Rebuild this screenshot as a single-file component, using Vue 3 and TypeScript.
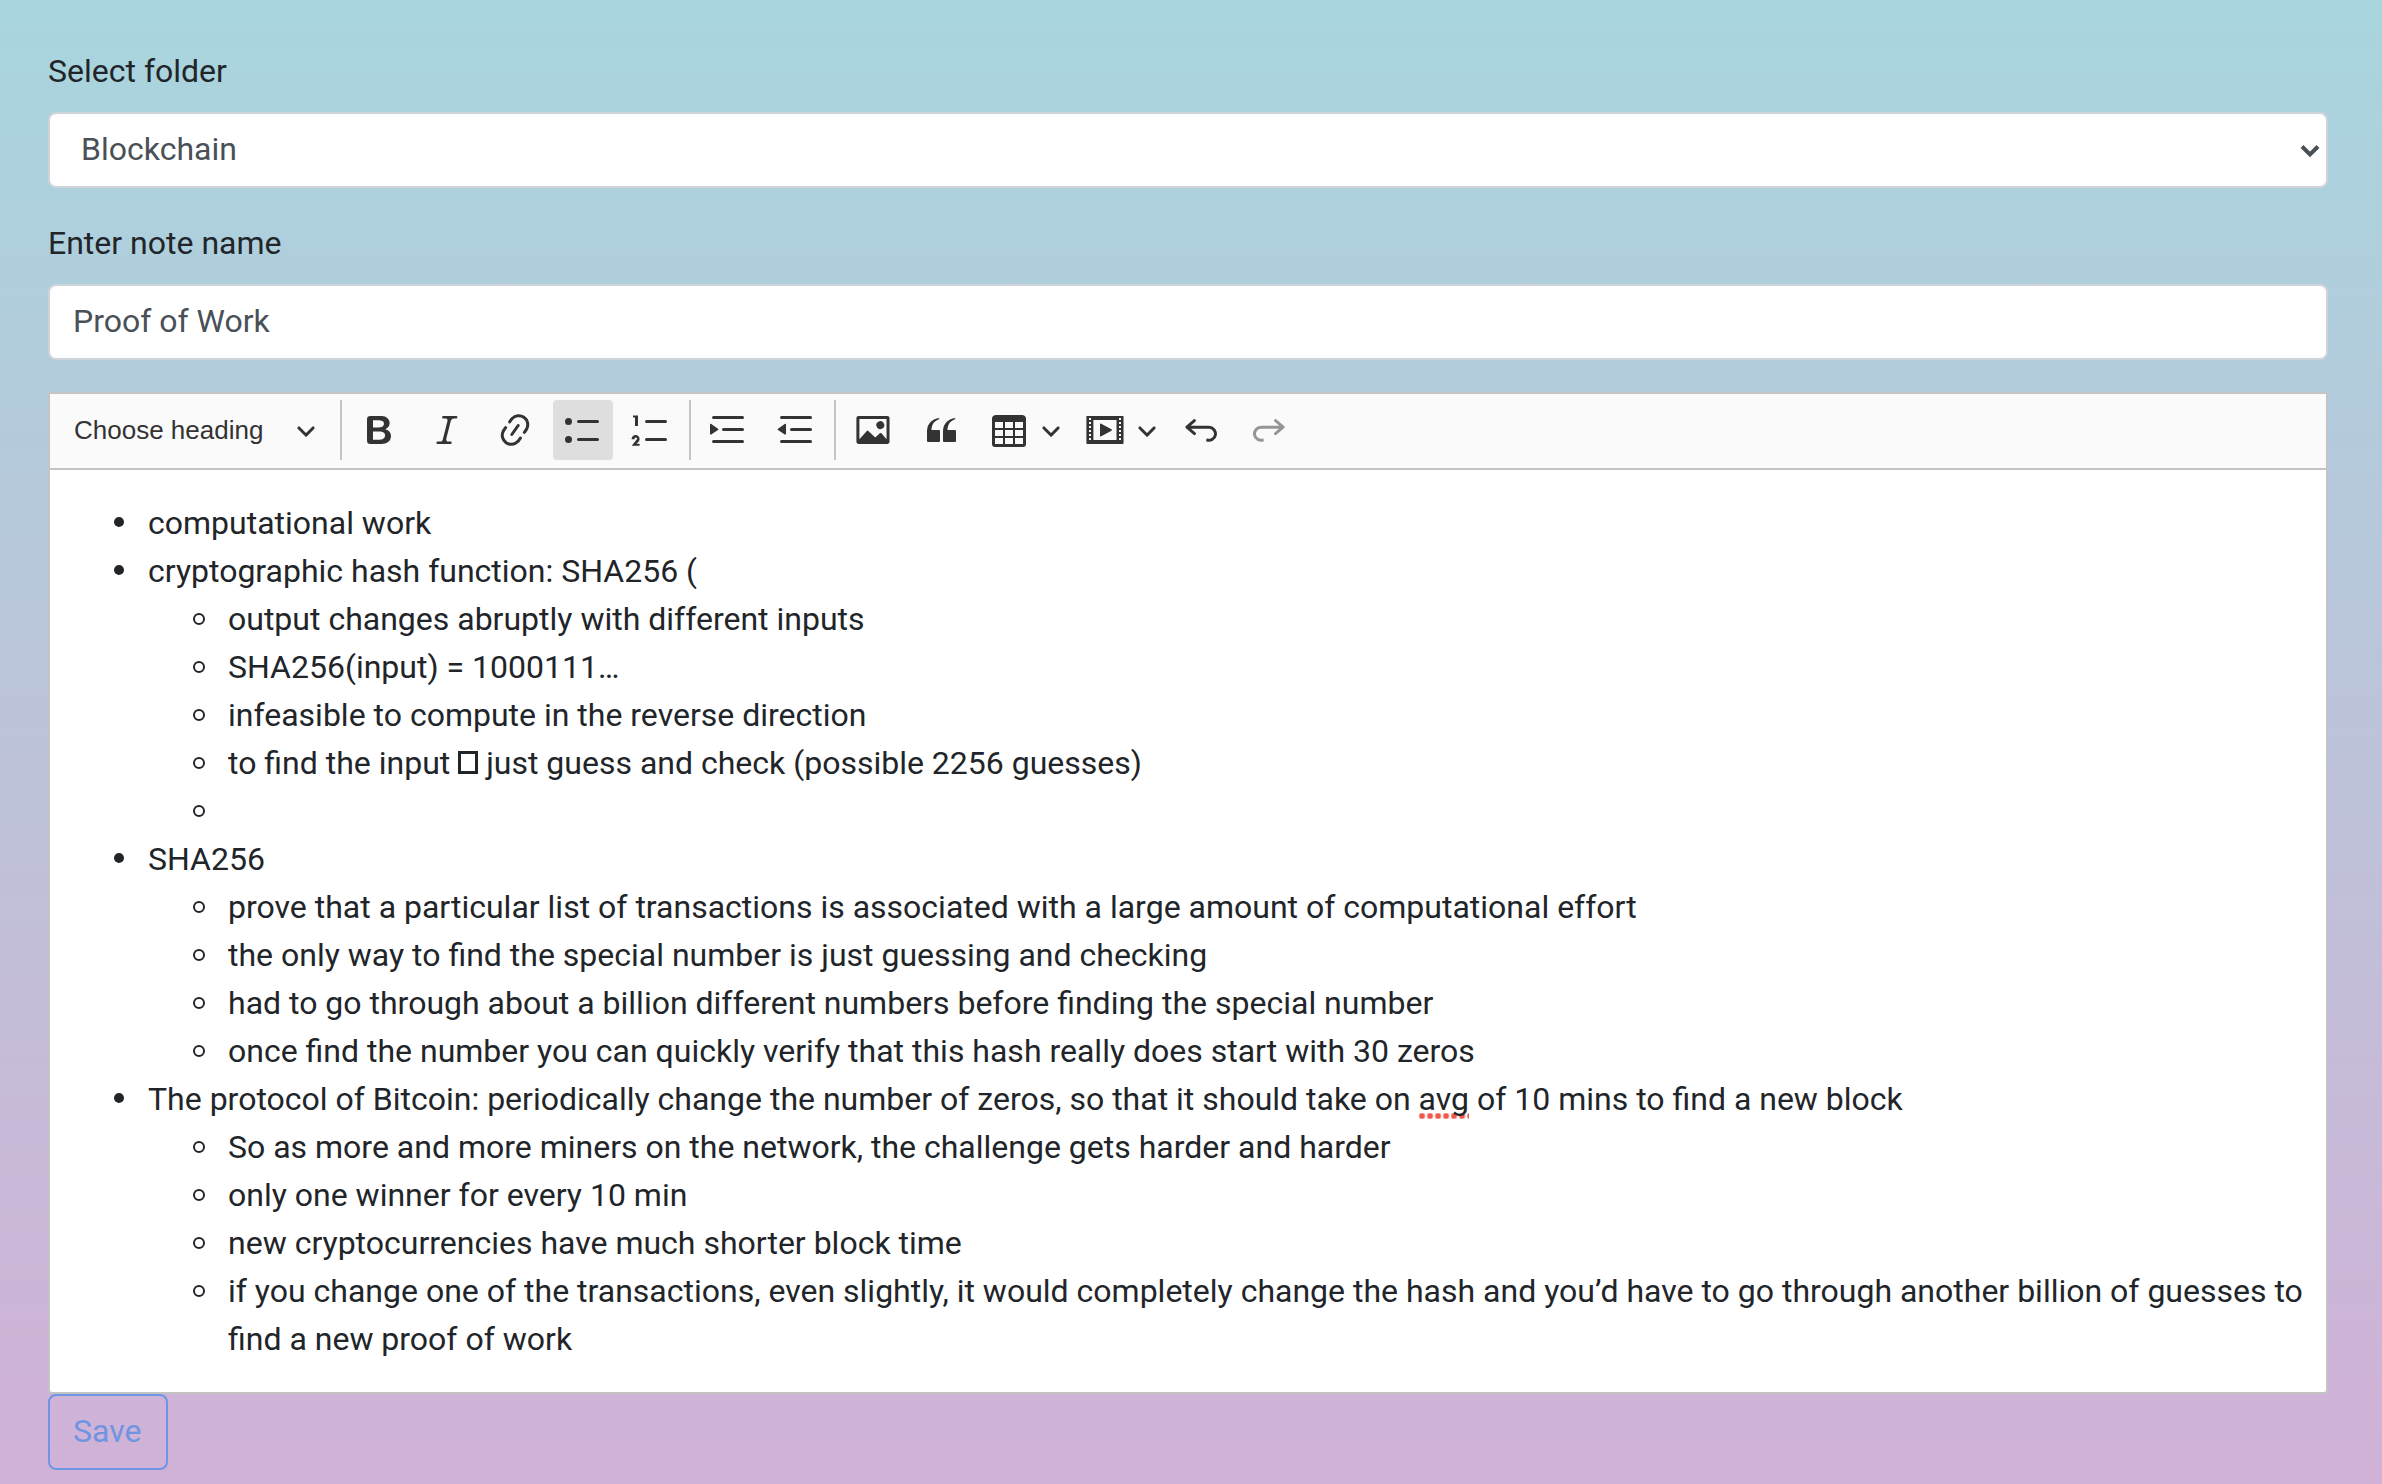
<script setup lang="ts">
import { ref } from 'vue'

interface Tool {
  id: string
  label: string
  paths: string[]
  active?: boolean
  disabled?: boolean
  split?: boolean
}

interface Note {
  text: string
  children: string[]
}

interface Segment {
  kind: 'text' | 'misspelled' | 'box'
  value: string
}

const folder = ref('Blockchain')
const noteName = ref('Proof of Work')

const arrow =
  'M.941 4.523a.75.75 0 1 1 1.06-1.06l3.006 3.005 3.005-3.005a.75.75 0 1 1 1.06 1.06l-3.549 3.55a.75.75 0 0 1-1.168-.136L.941 4.523z'

const line = (x: number, y: number) =>
  `M${x} ${y}c0 .414.336.75.75.75h${17.25 - x - 0.75}a.75.75 0 1 0 0-1.5h-${17.25 - x - 0.75}a.75.75 0 0 0-.75.75z`

const groups: Tool[][] = [
  [
    {
      id: 'bold',
      label: 'Bold',
      paths: [
        'M10.187 17H5.773c-.637 0-1.092-.138-1.364-.415-.273-.277-.409-.718-.409-1.323V4.738c0-.617.14-1.062.419-1.332.279-.27.73-.406 1.354-.406h4.68c.69 0 1.288.041 1.793.124.506.083.96.242 1.36.478.341.197.644.447.906.75a3.262 3.262 0 0 1 .808 2.162c0 1.401-.722 2.426-2.167 3.075C15.05 10.175 16 11.315 16 13.01a3.756 3.756 0 0 1-2.296 3.504 6.1 6.1 0 0 1-1.517.377c-.571.073-1.238.11-2 .11zm-.217-6.217H7v4.087h3.069c1.977 0 2.965-.69 2.965-2.072 0-.707-.256-1.22-.768-1.537-.512-.319-1.277-.478-2.296-.478zM7 5.13v3.619h2.606c.729 0 1.292-.067 1.69-.2a1.6 1.6 0 0 0 .91-.765c.165-.267.247-.566.247-.897 0-.707-.26-1.176-.778-1.409-.519-.232-1.31-.348-2.375-.348H7z',
      ],
    },
    {
      id: 'italic',
      label: 'Italic',
      paths: [
        'm9.586 14.633.021.004c-.036.335.095.655.393.962.082.083.173.15.274.201h1.474a.6.6 0 1 1 0 1.2H5.304a.6.6 0 0 1 0-1.2h1.15c.474-.07.809-.182 1.005-.334.157-.122.291-.32.404-.597l2.416-9.55a1.053 1.053 0 0 0-.281-.823 1.12 1.12 0 0 0-.442-.296H8.15a.6.6 0 0 1 0-1.2h6.443a.6.6 0 1 1 0 1.2h-1.195c-.376.056-.65.155-.823.296-.215.175-.423.439-.623.79l-2.366 9.347z',
      ],
    },
    {
      id: 'link',
      label: 'Link',
      paths: [
        'm11.077 15 .991-1.416a.75.75 0 1 1 1.229.86l-1.148 1.64a.748.748 0 0 1-.217.206 5.251 5.251 0 0 1-8.503-5.955.741.741 0 0 1 .12-.274l1.147-1.639a.75.75 0 1 1 1.228.86L4.933 10.7l.006.003a3.75 3.75 0 0 0 6.132 4.294l.006.004zm5.494-5.335a.748.748 0 0 1-.12.274l-1.147 1.639a.75.75 0 1 1-1.228-.86l.86-1.23a3.75 3.75 0 0 0-6.144-4.301l-.86 1.229a.75.75 0 0 1-1.229-.86l1.148-1.64a.748.748 0 0 1 .217-.206 5.251 5.251 0 0 1 8.503 5.955zm-4.563-2.532a.75.75 0 0 1 .184 1.045l-3.155 4.505a.75.75 0 1 1-1.229-.86l3.155-4.506a.75.75 0 0 1 1.045-.184z',
      ],
    },
    {
      id: 'bulleted',
      label: 'Bulleted List',
      active: true,
      paths: [
        line(7, 5.75),
        line(7, 14.75),
        'M1 5.75a1.75 1.75 0 1 0 3.5 0a1.75 1.75 0 1 0-3.5 0z',
        'M1 14.75a1.75 1.75 0 1 0 3.5 0a1.75 1.75 0 1 0-3.5 0z',
      ],
    },
    {
      id: 'numbered',
      label: 'Numbered List',
      paths: [
        line(7, 5.75),
        line(7, 14.75),
        'M3.5 3v5H2V3.7H1v-1h2.5V3z',
        'M.343 17.857l2.59-3.257H2.92a.6.6 0 1 0-1.04 0H.302a2 2 0 1 1 3.995 0h-.001c-.048.405-.16.734-.333.988-.175.254-.59.692-1.244 1.312H4.3v1h-4l.043-.043z',
      ],
    },
  ],
  [
    {
      id: 'indent',
      label: 'Increase indent',
      paths: [
        line(2, 3.75),
        line(7, 9.75),
        line(2, 15.75),
        'M1.632 6.95 5.02 9.358a.4.4 0 0 1-.013.661l-3.39 2.207A.4.4 0 0 1 1 11.892V7.275a.4.4 0 0 1 .632-.326z',
      ],
    },
    {
      id: 'outdent',
      label: 'Decrease indent',
      paths: [
        line(2, 3.75),
        line(7, 9.75),
        line(2, 15.75),
        'M4.368 6.95.98 9.358a.4.4 0 0 0 .013.661l3.39 2.207A.4.4 0 0 0 5 11.892V7.275a.4.4 0 0 0-.632-.326z',
      ],
    },
  ],
  [
    {
      id: 'image',
      label: 'Insert image',
      paths: [
        'M6.91 10.54c.26-.23.64-.21.88.03l3.36 3.14 2.23-2.06a.64.64 0 0 1 .87 0l2.52 2.97V4.5H3.2v10.12l3.71-4.08zm10.27-7.51c.6 0 1.09.47 1.09 1.05v11.84c0 .59-.49 1.06-1.09 1.06H2.79c-.6 0-1.09-.47-1.09-1.06V4.08c0-.58.49-1.05 1.1-1.05h14.38zm-5.22 5.56a1.96 1.96 0 1 1 3.4-1.96 1.96 1.96 0 0 1-3.4 1.96z',
      ],
    },
    {
      id: 'quote',
      label: 'Block quote',
      paths: [
        'M3 10.423a6.5 6.5 0 0 1 6.056-6.408l.038.67C6.448 5.423 5.354 7.663 5.22 10H9c.552 0 .5.432.5.986v4.511c0 .554-.448.503-1 .503h-5c-.552 0-.5-.449-.5-1.003v-4.574zm8 0a6.5 6.5 0 0 1 6.056-6.408l.038.67c-2.646.739-3.74 2.979-3.873 5.315H17c.552 0 .5.432.5.986v4.511c0 .554-.448.503-1 .503h-5c-.552 0-.5-.449-.5-1.003v-4.574z',
      ],
    },
    {
      id: 'table',
      label: 'Insert table',
      split: true,
      paths: [
        'M3 6v3h4V6H3zm0 4v3h4v-3H3zm0 4v3h4v-3H3zm5 3h4v-3H8v3zm5 0h4v-3h-4v3zm4-4v-3h-4v3h4zm0-4V6h-4v3h4zm1.5 8a1.5 1.5 0 0 1-1.5 1.5H3A1.5 1.5 0 0 1 1.5 17V4c.222-.863 1.068-1.5 2-1.5h13c.932 0 1.778.637 2 1.5v13zM12 13v-3H8v3h4zm0-4V6H8v3h4z',
      ],
    },
    {
      id: 'media',
      label: 'Insert media',
      split: true,
      paths: [
        'M18.68 3.03c.6 0 .59-.03.59.55v12.84c0 .59.01.56-.59.56H1.29c-.6 0-.59.03-.59-.56V3.58c0-.58-.01-.55.6-.55h17.38zM15.77 15.03V4.97H4.2v10.06h11.57zM2 4v1h1V4H2zm0 2v1h1V6H2zm0 2v1h1V8H2zm0 2v1h1v-1H2zm0 2v1h1v-1H2zm0 2v1h1v-1H2zM17 4v1h1V4h-1zm0 2v1h1V6h-1zm0 2v1h1V8h-1zm0 2v1h1v-1h-1zm0 2v1h1v-1h-1zm0 2v1h1v-1h-1zM7.5 7.177a.4.4 0 0 1 .593-.351l5.133 2.824a.4.4 0 0 1 0 .7l-5.133 2.824a.4.4 0 0 1-.593-.35V7.176v.001z',
      ],
    },
    {
      id: 'undo',
      label: 'Undo',
      paths: [
        'm5.042 9.367 2.189 1.837a.75.75 0 0 1-.965 1.149l-3.788-3.18a.747.747 0 0 1-.21-.284.75.75 0 0 1 .17-.945L6.23 4.762a.75.75 0 1 1 .964 1.15L4.863 7.866h8.917A.75.75 0 0 1 14 7.9a4 4 0 1 1-1.477 7.718l.344-1.489a2.5 2.5 0 1 0 1.094-4.73l.008-.032H5.042z',
      ],
    },
    {
      id: 'redo',
      label: 'Redo',
      disabled: true,
      paths: [
        'm14.958 9.367-2.189 1.837a.75.75 0 0 0 .965 1.149l3.788-3.18a.747.747 0 0 0 .21-.284.75.75 0 0 0-.17-.945L13.77 4.762a.75.75 0 1 0-.964 1.15l2.331 1.955H6.22A.75.75 0 0 0 6 7.9a4 4 0 1 0 1.477 7.718l-.344-1.489A2.5 2.5 0 1 1 6.039 9.4l-.008-.032h8.927z',
      ],
    },
  ],
]

const notes: Note[] = [
  { text: 'computational work', children: [] },
  {
    text: 'cryptographic hash function: SHA256 (',
    children: [
      'output changes abruptly with different inputs',
      'SHA256(input) = 1000111…',
      'infeasible to compute in the reverse direction',
      'to find the input [] just guess and check (possible 2256 guesses)',
      '',
    ],
  },
  {
    text: 'SHA256',
    children: [
      'prove that a particular list of transactions is associated with a large amount of computational effort',
      'the only way to find the special number is just guessing and checking',
      'had to go through about a billion different numbers before finding the special number',
      'once find the number you can quickly verify that this hash really does start with 30 zeros',
    ],
  },
  {
    text: 'The protocol of Bitcoin: periodically change the number of zeros, so that it should take on *avg* of 10 mins to find a new block',
    children: [
      'So as more and more miners on the network, the challenge gets harder and harder',
      'only one winner for every 10 min',
      'new cryptocurrencies have much shorter block time',
      'if you change one of the transactions, even slightly, it would completely change the hash and you’d have to go through another billion of guesses to find a new proof of work',
    ],
  },
]

// *word* is flagged by the spell checker, [] is a symbol the font has no glyph for.
const segments = (text: string): Segment[] =>
  text
    .split(/(\*[^*]+\*|\[\])/)
    .filter((part) => part !== '')
    .map((part): Segment => {
      if (part === '[]') return { kind: 'box', value: '' }
      if (part.startsWith('*')) return { kind: 'misspelled', value: part.slice(1, -1) }
      return { kind: 'text', value: part }
    })
</script>

<template>
  <form class="page" @submit.prevent>
    <div class="form-group">
      <label for="folder">Select folder</label>
      <div class="select-wrap">
        <select id="folder" v-model="folder" class="control select">
          <option>Blockchain</option>
        </select>
        <svg class="chevron" viewBox="0 0 20 14" aria-hidden="true">
          <path d="M2 2.5l8 8 8-8" fill="none" stroke="#495057" stroke-width="4" />
        </svg>
      </div>
    </div>

    <div class="form-group">
      <label for="note-name">Enter note name</label>
      <input id="note-name" v-model="noteName" type="text" class="control" />
    </div>

    <div class="editor">
      <div class="toolbar" role="toolbar" aria-label="Editor toolbar">
        <button type="button" class="heading">
          <span>Choose heading</span>
          <svg class="arrow" viewBox="0 0 10 10" aria-hidden="true"><path :d="arrow" /></svg>
        </button>
        <template v-for="(group, g) in groups" :key="g">
          <span class="separator"></span>
          <div v-for="tool in group" :key="tool.id" class="tool">
            <button
              type="button"
              class="tool-button"
              :class="{ active: tool.active }"
              :disabled="tool.disabled"
              :aria-label="tool.label"
            >
              <svg class="icon" viewBox="0 0 20 20" aria-hidden="true">
                <path v-for="(d, i) in tool.paths" :key="i" :d="d" fill-rule="evenodd" />
              </svg>
            </button>
            <button v-if="tool.split" type="button" class="split" :aria-label="tool.label + ' options'">
              <svg class="arrow" viewBox="0 0 10 10" aria-hidden="true"><path :d="arrow" /></svg>
            </button>
          </div>
        </template>
      </div>
      <div class="content" role="textbox" aria-multiline="true" aria-label="Note">
        <ul>
          <li v-for="(note, n) in notes" :key="n">
            <span v-for="(part, p) in segments(note.text)" :key="p" :class="part.kind">{{ part.value }}</span>
            <ul v-if="note.children.length">
              <li v-for="(child, c) in note.children" :key="c">
                <span v-for="(part, p) in segments(child)" :key="p" :class="part.kind">{{ part.value }}</span>
              </li>
            </ul>
          </li>
        </ul>
      </div>
    </div>
    <button type="submit" class="save" disabled>Save</button>
  </form>
</template>

<style>
body {
  margin: 0;
}
</style>

<style scoped>
.page {
  box-sizing: border-box;
  min-height: 100vh;
  padding: 48px 54px 14px 48px;
  background: linear-gradient(#a8d5de, #d1b1d7);
  color: #212529;
  font-family: Roboto, 'Liberation Sans', sans-serif;
  font-size: 32px;
  line-height: 48px;
}

.form-group {
  margin-bottom: 32px;
}

label {
  display: block;
  padding-bottom: 18px;
  line-height: 46px;
}

.control {
  display: block;
  box-sizing: border-box;
  width: 100%;
  height: 76px;
  padding: 11px 23px 13px;
  border: 2px solid #ced4da;
  border-radius: 8px;
  background: #fff;
  color: #495057;
  font: inherit;
}

.select-wrap {
  position: relative;
}

.select {
  padding-left: 31px;
  appearance: none;
}

.chevron {
  position: absolute;
  top: 32px;
  right: 8px;
  width: 20px;
  height: 14px;
  pointer-events: none;
}

.editor {
  border: 2px solid #c4c4c4;
  border-radius: 4px;
  background: #fff;
}

.toolbar {
  display: flex;
  flex-wrap: wrap;
  gap: 8px;
  padding: 6px 8px 8px;
  border-bottom: 2px solid #c4c4c4;
  background: #fafafa;
}

.toolbar button {
  display: flex;
  align-items: center;
  box-sizing: border-box;
  height: 60px;
  border: 0;
  border-radius: 4px;
  background: none;
  color: #333;
}

.toolbar .heading {
  justify-content: space-between;
  width: 274px;
  padding: 0 16px;
  font: 26px 'Liberation Sans', Arial, sans-serif;
}

.separator {
  width: 2px;
  height: 60px;
  margin-right: -1px;
  background: #c4c4c4;
}

.tool {
  display: flex;
}

.toolbar .tool-button {
  width: 60px;
  padding: 10px;
}

.toolbar .active {
  background: #dedede;
}

.toolbar .tool-button:disabled .icon {
  opacity: 0.5;
}

.toolbar .split {
  width: 28px;
  padding: 0 6px 0 2px;
}

.icon {
  width: 40px;
  height: 40px;
  fill: currentColor;
}

.arrow {
  width: 20px;
  height: 20px;
  fill: currentColor;
}

.content {
  padding: 29px 18px;
}

.content ul {
  margin: 0;
  padding-left: 80px;
  list-style: none;
}

.content li {
  position: relative;
  min-height: 48px;
}

.content li::before {
  content: '';
  position: absolute;
  top: 18px;
  left: -35px;
  box-sizing: border-box;
  width: 12px;
  height: 12px;
  border: 2px solid #212529;
  border-radius: 50%;
}

.content > ul > li::before {
  left: -34px;
  width: 10px;
  height: 10px;
  border-width: 5px;
}

.misspelled {
  padding-bottom: 1px;
  background: radial-gradient(circle at 3px 3px, #f0574b 2px, transparent 4px) 0 100% / 8px 6px repeat-x;
}

.box {
  display: inline-block;
  box-sizing: border-box;
  width: 20px;
  height: 23px;
  border: 3px solid currentColor;
}

.save {
  display: block;
  box-sizing: border-box;
  height: 76px;
  padding: 11px 25px 13px 23px;
  border: 2px solid #6e95e2;
  border-radius: 8px;
  background: transparent;
  color: #6e95e2;
  font: inherit;
}
</style>
